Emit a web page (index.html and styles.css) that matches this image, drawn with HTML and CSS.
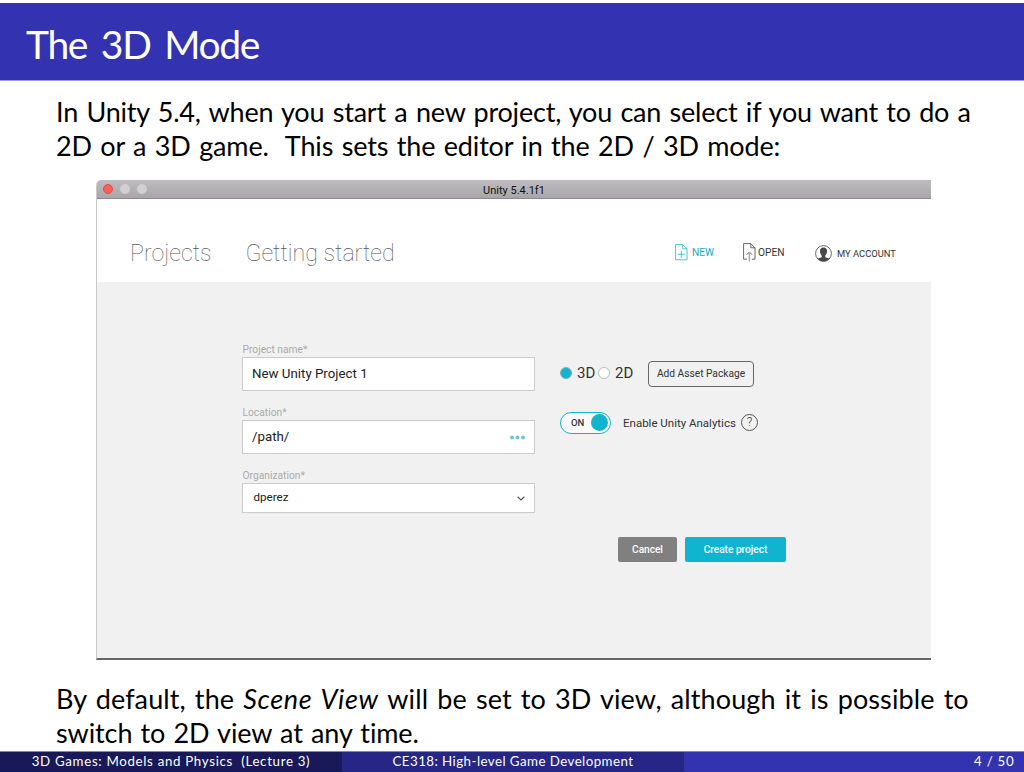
FILE: index.html
```html
<!DOCTYPE html>
<html lang="en">
<head>
<meta charset="utf-8">
<title>The 3D Mode</title>
<link rel="stylesheet" href="styles.css">
</head>
<body>
<main class="slide">
  <header class="slide-title"><h1>The 3D Mode</h1></header>
  <section class="content">
    <p class="copy intro"><span class="line l1">In Unity 5.4, when you start a new project, you can select if you want to do a</span><span class="line l2">2D or a 3D game.&nbsp; This sets the editor in the 2D / 3D mode:</span></p>
    <div class="window">
      <div class="titlebar"><i class="dot red"></i><i class="dot"></i><i class="dot"></i><span class="window-name">Unity 5.4.1f1</span></div>
      <nav class="nav">
        <span class="tab projects">Projects</span><span class="tab started">Getting started</span>
        <span class="action new"><svg width="13" height="17" viewBox="0 0 13 17"><path d="M.6.6h7.2l4.2 4.2v11H.6zM7.8.6v4.2H12M6.3 6.8v7M2.8 10.3h7"/></svg>NEW</span>
        <span class="action open"><svg width="13" height="19" viewBox="0 0 13 19"><path d="M4 16.2H.6V.6h7.2l4.2 4.2v11.4H8.8M7.8.6v4.2H12M3.6 11.8 6.4 9l2.8 2.8"/><path class="stem" d="M6.400 18.500V9"/></svg>OPEN</span>
        <span class="action account"><svg width="17" height="17" viewBox="0 0 17 17"><circle cx="8.5" cy="8.5" r="7.9"/><path class="solid" d="M8.5 2.4c2.5 0 3.7 1.6 3.5 4-.1 1.7-.8 3.2-1.7 4v1.8c1.5.6 3 .9 4.2 1.6-3 3.4-9 3.4-12 0 1.200-.7 2.700-1 4.200-1.600v-1.800C5.800 9.600 5.100 8.100 5 6.400c-.2-2.400 1-4 3.500-4z"/></svg>MY ACCOUNT</span>
      </nav>
      <div class="panel">
        <div class="fields">
          <label class="label">Project name*</label>
          <div class="field">New Unity Project 1</div>
          <label class="label">Location*</label>
          <div class="field location">/path/<svg width="15" height="5" viewBox="0 0 15 5"><circle cx="2" cy="2.500" r="1.900"/><circle cx="7.500" cy="2.500" r="1.900"/><circle cx="13" cy="2.500" r="1.900"/></svg></div>
          <label class="label">Organization*</label>
          <div class="field select">dperez<svg width="8" height="5" viewBox="0 0 8 5"><path d="M.6.700 4 4 7.400.700"/></svg></div>
        </div>
        <div class="options">
          <div class="modes"><i class="radio on"></i><span class="mode">3D</span><i class="radio"></i><span class="mode second">2D</span><span class="asset">Add Asset Package</span></div>
          <div class="analytics"><span class="toggle">ON<i></i></span><span class="enable">Enable Unity Analytics</span><span class="help">?</span></div>
          <div class="buttons"><span class="btn cancel">Cancel</span><span class="btn create">Create project</span></div>
        </div>
      </div>
    </div>
    <p class="copy outro"><span class="line l3">By default, the <em>Scene View</em> will be set to 3D view, although it is possible to</span><span class="line l4">switch to 2D view at any time.</span></p>
  </section>
  <footer class="footer"><span class="f1">3D Games: Models and Physics&nbsp; (Lecture 3)</span><span class="f2">CE318: High-level Game Development</span><span class="f3">4 / 50</span></footer>
</main>
</body>
</html>
```
FILE: styles.css
```css
* { box-sizing: border-box; }
body { margin: 0; background: #fff; }
.slide { width: 1024px; height: 772px; padding-top: 3px; display: flex; flex-direction: column; overflow: hidden; font-family: Lato, sans-serif; font-variant-ligatures: none; color: #000; }
.slide-title { height: 78px; flex: none; background: #3333b2; border-bottom: 1px solid #9c9cdb; padding-left: 26px; color: #fff; }
h1 { margin: 0; font-size: 39px; line-height: 83px; font-weight: 400; letter-spacing: -1.300px; word-spacing: 5px; white-space: nowrap; }
.content { height: 670px; flex: none; padding-left: 56px; }
.copy { margin: 0; font-size: 27px; line-height: 34px; }
.line { display: block; white-space: nowrap; width: max-content; }
.intro { padding-top: 14px; height: 99px; }
.outro { padding-top: 22px; }
.l1 { letter-spacing: -.2px; word-spacing: 1.650px; }
.l2 { letter-spacing: -.150px; word-spacing: 1.700px; }
.l3 { letter-spacing: .1px; word-spacing: 2.100px; }
.l3 em { letter-spacing: .650px; }
.l4 { letter-spacing: -.1px; word-spacing: 1.400px; }
.window { width: 835px; height: 480px; margin-left: 40px; border-left: 1px solid #c9c9c9; border-bottom: 2px solid #666; border-radius: 5px 0 0 0; font-family: Roboto, sans-serif; color: #333; overflow: hidden; }
.titlebar { position: relative; height: 19px; background: linear-gradient(#bebcbe, #a8a6a9); border-bottom: 1px solid #8c8a8d; display: flex; align-items: center; gap: 7px; padding-left: 6px; }
.dot { width: 10px; height: 10px; border-radius: 50%; background: #d0d0d0; }
.dot.red { background: #ff5f58; border: .5px solid #df4944; }
.window-name { position: absolute; left: 0; right: 0; top: 1px; text-align: center; font-size: 11px; line-height: 19px; color: #111; }
.nav { height: 83px; background: #fff; display: flex; align-items: center; padding: 24px 0 0 33px; }
.tab { font-size: 23.200px; font-weight: 100; color: #555; white-space: nowrap; line-height: 30px; }
.projects { width: 115.500px; }
.started { width: 429.500px; }
.tab, .action { flex: none; }
.action { display: flex; align-items: center; gap: 4px; font-size: 10.200px; white-space: nowrap; color: #333; }
.action svg { fill: none; stroke: #555; stroke-width: .9; flex: none; }
.action .solid { fill: #484848; stroke: none; }
.action .stem { stroke: #aaa; stroke-width: 1.600; }
.new { width: 68px; color: #13a9c4; }
.new svg { stroke: #36bdd1; }
.open { width: 72px; gap: 2px; }
.account { gap: 5px; padding-top: 2px; font-size: 9.400px; }
.panel { height: 376px; background: #f1f1f1; padding-left: 145px; display: flex; gap: 25px; }
.fields { width: 293px; padding-top: 60px; }
.label { display: block; height: 15px; font-size: 10.250px; line-height: 16px; color: #aaa; padding-left: .5px; }
.field { height: 34px; margin-bottom: 14px; background: #fff; border: 1px solid #cbcbcb; padding: 0 9px 2px 9px; display: flex; align-items: center; justify-content: space-between; font-size: 13.300px; color: #222; }
.field svg { fill: #6ac4dc; position: relative; top: 1px; }
.location svg { left: -.5px; }
.select { height: 30px; font-size: 11.600px; padding-left: 10.500px; }
.select svg { fill: none; stroke: #4c5962; stroke-width: 1.200; }
.options { padding-top: 79px; width: 240px; }
.modes { height: 26px; display: flex; align-items: center; }
.radio { width: 12px; height: 12px; border: 1px solid #bbb; background: #fff; border-radius: 50%; position: relative; top: -1px; }
.radio.on { background: #12b3ce; border-color: #84afb7; }
.mode { width: 22px; padding-left: 5px; font-size: 15px; position: relative; top: -1px; }
.mode.second { width: 42px; }
.radio:nth-of-type(2) { margin-left: 4px; }
.asset { width: 106px; height: 26px; border: 1px solid #666; border-radius: 4px; font-size: 10.200px; line-height: 24px; text-align: center; white-space: nowrap; margin-left: -4px; }
.analytics { margin-top: 24px; height: 23px; display: flex; align-items: center; }
.toggle { width: 51px; height: 22px; border: 1px solid #12b3ce; border-radius: 12px; background: #fafafa; display: flex; align-items: center; justify-content: space-between; padding: 0 2px 0 10px; font-size: 9.500px; font-weight: 500; }
.toggle i { width: 17px; height: 17px; border-radius: 50%; background: #12b3ce; }
.enable { width: 118px; margin-left: 12px; font-size: 11.500px; white-space: nowrap; }
.help { width: 17px; height: 17px; border: 1px solid #555; border-radius: 50%; font-size: 12px; line-height: 15px; text-align: center; font-weight: 300; }
.buttons { display: flex; gap: 8px; margin: 103px 0 0 58px; }
.btn { height: 25px; border-radius: 2px; color: #fff; font-size: 10.100px; line-height: 25px; text-align: center; font-weight: 500; }
.cancel { width: 59px; background: #808080; }
.create { width: 101px; background: #0fb4ce; }
.footer { height: 21px; flex: none; border-top: 1px solid #8585a5; display: grid; grid-template-columns: 342px 342px 340px; font-size: 13.300px; line-height: 19px; color: #fff; text-align: center; white-space: nowrap; }
.f1 { background: #191959; letter-spacing: .68px; }
.f2 { background: #262686; letter-spacing: .45px; }
.f3 { background: #3333b2; text-align: right; padding-right: 9.500px; letter-spacing: .75px; }
```
